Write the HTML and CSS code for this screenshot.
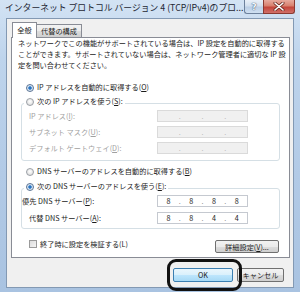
FILE: index.html
```html
<!DOCTYPE html>
<html lang="ja">
<head>
  <meta charset="UTF-8">
  <title>インターネット プロトコル バージョン 4 (TCP/IPv4)のプロパティ</title>
  <link rel="stylesheet" href="styles.css">
</head>
<body>

  <div class="window">

    <!-- Title Bar -->
    <div class="title-bar">
      <span class="title">インターネット プロトコル バージョン 4 (TCP/IPv4)のプロ...</span>
      <button class="help-btn">?</button>
      <button class="close-btn">
        <svg width="12" height="9" viewBox="0 0 12 9">
          <path d="M2 1 L10 8 M10 1 L2 8" stroke="#6b2a22" stroke-width="3" stroke-linecap="round"/>
          <path d="M2 1 L10 8 M10 1 L2 8" stroke="#ffffff" stroke-width="1.6" stroke-linecap="round"/>
        </svg>
      </button>
    </div>

    <!-- Dialog -->
    <div class="client">
      <div class="tabs">
        <div class="tab active">全般</div>
        <div class="tab">代替の構成</div>
      </div>

      <div class="panel">
        <p class="desc">
          ネットワークでこの機能がサポートされている場合は、IP 設定を自動的に取得する<br>
          ことができます。サポートされていない場合は、ネットワーク管理者に適切な IP 設<br>
          定を問い合わせてください。
        </p>

        <div class="radio-row first">
          <span class="radio checked"></span>IP アドレスを自動的に取得する(<u>O</u>)
        </div>

        <fieldset class="group">
          <legend><span class="radio"></span>次の IP アドレスを使う(<u>S</u>):</legend>
          <div class="field-row">
            <span class="label off">IP アドレス(<u>I</u>):</span>
            <div class="ip-box off">
              <span class="oct"></span><span class="dot">.</span><span class="oct"></span><span class="dot">.</span><span class="oct"></span><span class="dot">.</span><span class="oct"></span>
            </div>
          </div>
          <div class="field-row">
            <span class="label off">サブネット マスク(<u>U</u>):</span>
            <div class="ip-box off">
              <span class="oct"></span><span class="dot">.</span><span class="oct"></span><span class="dot">.</span><span class="oct"></span><span class="dot">.</span><span class="oct"></span>
            </div>
          </div>
          <div class="field-row">
            <span class="label off">デフォルト ゲートウェイ(<u>D</u>):</span>
            <div class="ip-box off">
              <span class="oct"></span><span class="dot">.</span><span class="oct"></span><span class="dot">.</span><span class="oct"></span><span class="dot">.</span><span class="oct"></span>
            </div>
          </div>
        </fieldset>

        <div class="radio-row dns-auto">
          <span class="radio"></span>DNS サーバーのアドレスを自動的に取得する(<u>B</u>)
        </div>

        <fieldset class="group dns">
          <legend><span class="radio checked"></span>次の DNS サーバーのアドレスを使う(<u>E</u>):</legend>
          <div class="field-row">
            <span class="label shifted">優先 DNS サーバー(<u>P</u>):</span>
            <div class="ip-box">
              <span class="oct">8</span><span class="dot">.</span><span class="oct">8</span><span class="dot">.</span><span class="oct">8</span><span class="dot">.</span><span class="oct">8</span>
            </div>
          </div>
          <div class="field-row">
            <span class="label">代替 DNS サーバー(<u>A</u>):</span>
            <div class="ip-box">
              <span class="oct">8</span><span class="dot">.</span><span class="oct">8</span><span class="dot">.</span><span class="oct">4</span><span class="dot">.</span><span class="oct">4</span>
            </div>
          </div>
        </fieldset>

        <div class="check-row">
          <span class="checkbox"></span>
          <span class="check-label">終了時に設定を検証する(L)</span>
          <button class="btn detail-btn">詳細設定(<u>V</u>)...</button>
        </div>
      </div>

      <div class="buttons">
        <button class="btn ok-btn">OK</button>
        <button class="btn cancel-btn">キャンセル</button>
      </div>
    </div>

    <!-- Annotation -->
    <div class="highlight"></div>
  </div>

</body>
</html>
```

FILE: styles.css
```css
* {
  box-sizing: border-box;
  margin: 0;
  padding: 0;
}

body {
  width: 300px;
  height: 292px;
  overflow: hidden;
  font-family: "Noto Sans CJK JP", "Noto Sans", sans-serif;
  font-size: 7.2px;
  color: #1b1b1b;
  background: #bcd2ea;
}

u {
  text-decoration: underline;
  text-underline-offset: 1px;
}

.window {
  position: relative;
  width: 300px;
  height: 292px;
  display: flex;
  flex-direction: column;
  padding: 0 6px 4px 6px;
  background: linear-gradient(to bottom, #d3e3f4 0%, #bed4ec 20%, #b2cae6 60%, #a9c3e1 100%);
}

/* Title Bar */
.title-bar {
  height: 18px;
  display: flex;
  align-items: flex-start;
  margin-right: -1px;
}

.title {
  flex: 1;
  margin-left: -1px;
  font-size: 8.8px;
  line-height: 16px;
  color: #1e2733;
  white-space: nowrap;
}

.help-btn,
.close-btn {
  height: 14px;
  border: 1px solid #6d819c;
  border-top: none;
  display: flex;
  align-items: center;
  justify-content: center;
  font-family: "DejaVu Sans", sans-serif;
}

.help-btn {
  width: 19px;
  border-radius: 0 0 0 3px;
  border-right: none;
  background: linear-gradient(to bottom, #e9f0f8 0%, #d3e0ee 45%, #bccfe5 55%, #cfe0f2 100%);
  font-size: 9px;
  font-weight: bold;
  color: #f4f8fc;
  text-shadow: 0 0 1px #3c5270, 0 0 1px #3c5270;
}

.close-btn {
  width: 32px;
  border-radius: 0 0 3px 0;
  border-color: #8a3a32;
  background: linear-gradient(to bottom, #e7aa9e 0%, #d8806e 45%, #c4453a 55%, #d0706a 100%);
}

/* Dialog */
.client {
  flex: 1;
  background: #f0f0f0;
  border: 1px solid #8399b3;
  padding: 3px 4px 0 4px;
  display: flex;
  flex-direction: column;
}

.tabs {
  height: 15px;
  display: flex;
  align-items: flex-end;
  margin-left: 1px;
}

.tab {
  height: 13px;
  width: 46px;
  margin-left: -1px;
  border: 1px solid #898c95;
  border-bottom: none;
  background: linear-gradient(to bottom, #f2f2f2 0%, #ebebeb 50%, #dddddd 51%, #cfcfcf 100%);
  text-align: center;
  line-height: 12px;
}

.tab.active {
  position: relative;
  z-index: 1;
  height: 16px;
  width: 25px;
  margin-left: 0;
  margin-bottom: -1px;
  background: #ffffff;
  line-height: 14px;
}

.panel {
  width: 279px;
  height: 221px;
  background: #ffffff;
  border: 1px solid #898c95;
  padding: 0 10px 0 6px;
}

.desc {
  line-height: 11px;
  white-space: nowrap;
}

.radio-row {
  height: 11px;
  line-height: 11px;
  display: flex;
  align-items: center;
  margin-left: 8px;
  white-space: nowrap;
}

.radio-row.first {
  margin-top: 11px;
}

.radio-row.dns-auto {
  margin-top: 5px;
}

.radio {
  width: 8px;
  height: 8px;
  border-radius: 50%;
  border: 1px solid #9a9fa6;
  background: radial-gradient(circle at 50% 40%, #ffffff 0%, #e6e6e6 60%, #d4d4d4 100%);
  margin-right: 3px;
  flex: none;
  position: relative;
}

.radio.checked {
  border-color: #5a7393;
  background: radial-gradient(circle at 50% 50%, #1d64b0 0%, #3b84cf 35%, #cfdff0 45%, #f2f6fb 100%);
}

.group {
  margin: 3px -1px 0 3px;
  padding: 0 7px 6px 2px;
  border: 1px solid #d5dfe5;
  border-radius: 3px;
}

.group.dns {
  margin-top: 4px;
  padding-bottom: 4px;
}

.group legend {
  display: flex;
  align-items: center;
  height: 14px;
  padding: 0 2px 3px 2px;
  line-height: 11px;
  background: #ffffff;
  white-space: nowrap;
}

.field-row {
  height: 12px;
  display: flex;
  align-items: center;
  margin-top: 4px;
  padding-left: 5px;
}

.field-row:first-of-type {
  margin-top: 0;
}

.dns .field-row {
  margin-top: 5px;
}

.dns .field-row:first-of-type {
  margin-top: 0;
}

.label {
  width: 128px;
  flex: none;
  white-space: nowrap;
}

.label.off {
  color: #a0a0a0;
}

.label.shifted {
  margin-left: -7px;
  width: 135px;
}

.ip-box {
  width: 91px;
  height: 12px;
  display: flex;
  align-items: center;
  border: 1px solid #c5c9d0;
  background: #ffffff;
  padding: 0 1px;
  color: #1b1b1b;
}

.ip-box.off {
  background: #f0f0f0;
  border-color: #dadada;
  color: #a8a8a8;
}

.oct {
  flex: 1;
  text-align: center;
}

.dot {
  width: 4px;
  text-align: center;
  color: #8a8a8a;
}

.ip-box.off .dot {
  color: #b8b8b8;
}

.check-row {
  display: flex;
  align-items: flex-start;
  margin-top: 10px;
  padding-left: 11px;
}

.checkbox {
  width: 8px;
  height: 8px;
  margin-top: 1px;
  border: 1px solid #9a9a9a;
  background: linear-gradient(135deg, #dcdcdc 0%, #f4f4f4 100%);
  flex: none;
}

.check-label {
  margin-left: 3px;
  line-height: 11px;
  white-space: nowrap;
}

.btn {
  font-family: inherit;
  font-size: 7.2px;
  color: #1b1b1b;
  height: 14px;
  border: 1px solid #707070;
  border-radius: 2px;
  background: linear-gradient(to bottom, #f2f2f2 0%, #ebebeb 50%, #dddddd 51%, #cfcfcf 100%);
  display: flex;
  align-items: center;
  justify-content: center;
  white-space: nowrap;
}

.detail-btn {
  width: 64px;
  height: 13px;
  margin-top: 1px;
  margin-left: auto;
}

.buttons {
  display: flex;
  justify-content: flex-end;
  gap: 4px;
  margin-top: 10px;
  padding-right: 5px;
}

.ok-btn {
  width: 60px;
  border-color: #3c7fb1;
  background: linear-gradient(to bottom, #eaf6fd 0%, #d9f0fc 50%, #bee6fd 51%, #a7d9f5 100%);
}

.cancel-btn {
  width: 47px;
}

.highlight {
  position: absolute;
  left: 167px;
  top: 259px;
  width: 75px;
  height: 32px;
  border: 3px solid #111111;
  border-radius: 9px;
}
```
